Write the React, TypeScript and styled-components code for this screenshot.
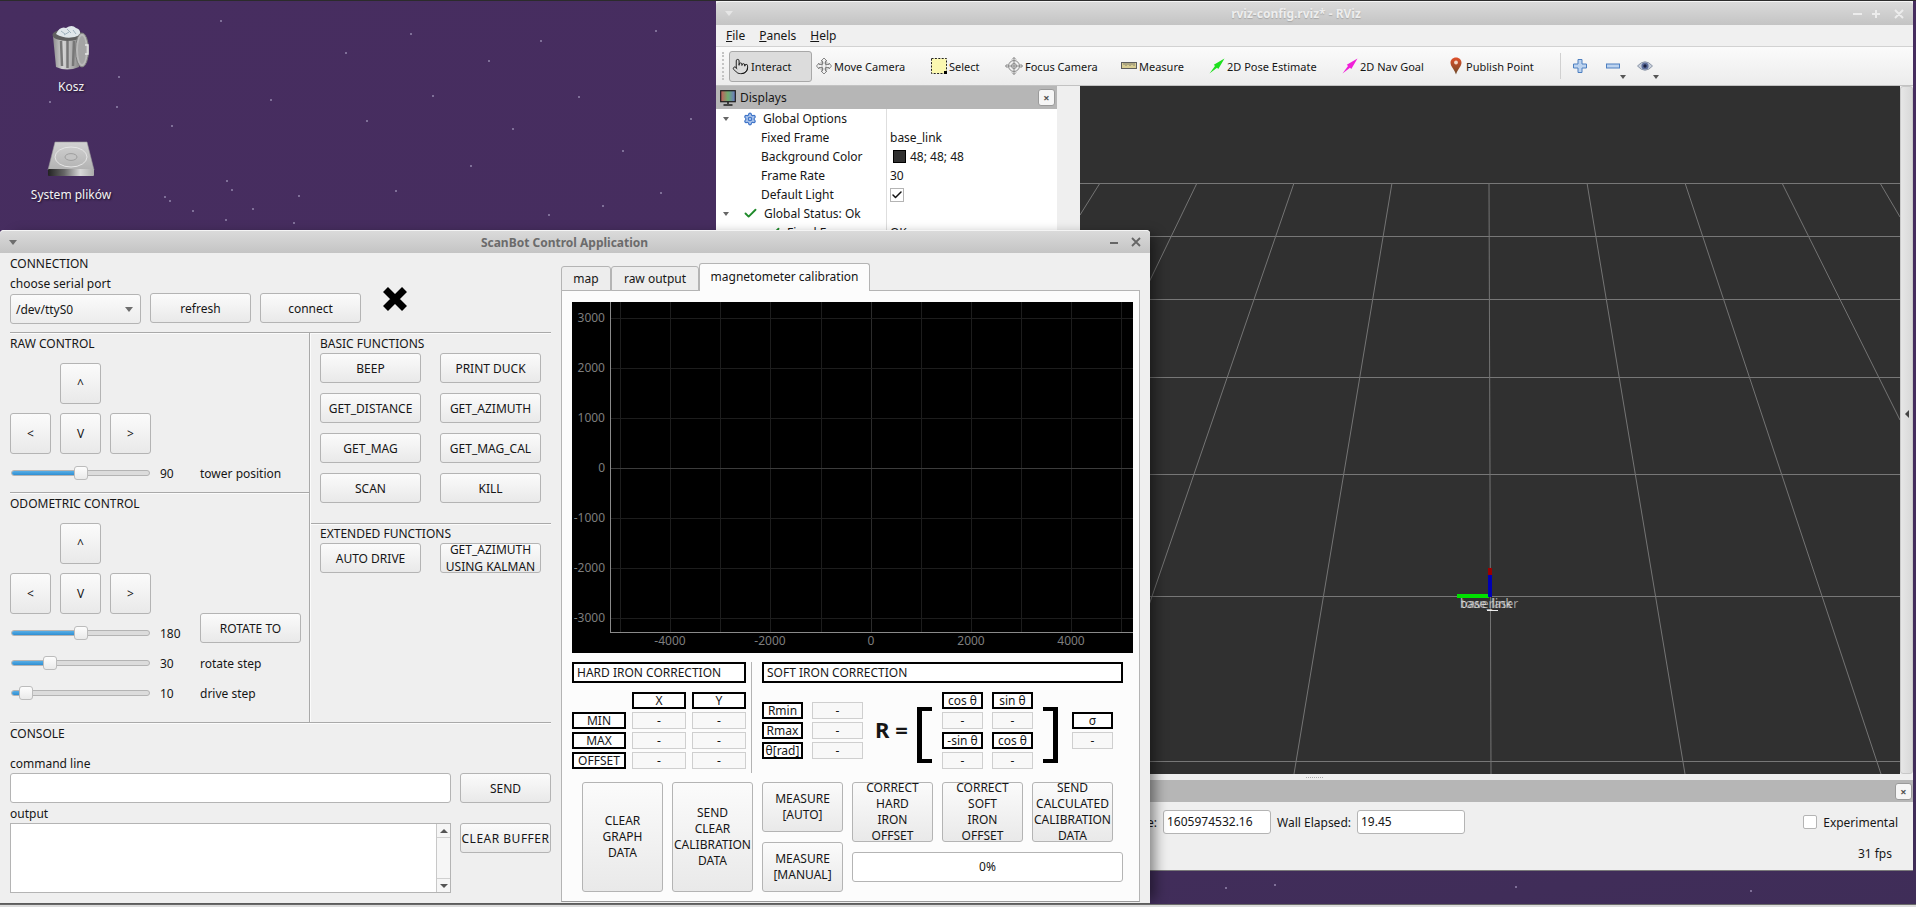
import React from 'react';
import styled, { createGlobalStyle } from 'styled-components';
import { Check, Settings, Pointer } from 'lucide-react';

const GlobalStyle = createGlobalStyle`
  html, body {
    margin: 0;
    padding: 0;
    width: 1916px;
    height: 907px;
    overflow: hidden;
    background: #452d5e;
    font-family: "Noto Sans", "DejaVu Sans", sans-serif;
    font-size: 12px;
    color: #161616;
  }
  * { box-sizing: border-box; }
`;

const Desktop = styled.div`
  position: relative;
  width: 1916px;
  height: 907px;
  overflow: hidden;
  background: linear-gradient(170deg, #472d60 0%, #452d5e 60%, #3f2d58 100%);
`;

const Wallpaper = styled.svg`
  position: absolute;
  inset: 0;
`;

const TopEdge = styled.div`
  position: absolute;
  left: 0;
  top: 0;
  width: 100%;
  height: 1px;
  background: #2b2b2b;
`;

const BottomEdge = styled.div`
  position: absolute;
  left: 0;
  bottom: 0;
  width: 100%;
  height: 3px;
  border-top: 1px solid #6a6a6a;
  background: #dcdcdc;
`;

const DesktopIcon = styled.div<{ $x: number; $y: number }>`
  position: absolute;
  left: ${p => p.$x}px;
  top: ${p => p.$y}px;
  width: 100px;
  display: flex;
  flex-direction: column;
  align-items: center;
  color: #f4f4f4;
  text-shadow: 1px 1px 2px #1a1026;
`;

const IconLabel = styled.div<{ $gap: number }>`
  margin-top: ${p => p.$gap}px;
  line-height: 16px;
`;

/* ---------- shared window parts ---------- */

const TitleBar = styled.div<{ $h: number }>`
  height: ${p => p.$h}px;
  flex: none;
  display: flex;
  align-items: center;
  padding: 0 6px 0 9px;
  background: linear-gradient(#dadada, #c4c4c4);
  border-top: 1px solid #f4f4f4;
  border-radius: 4px 4px 0 0;
`;

const TitleText = styled.div<{ $active?: boolean; $shift: number }>`
  flex: 1;
  text-align: center;
  font-weight: 700;
  font-size: 12px;
  margin-right: ${p => p.$shift}px;
  color: ${p => (p.$active ? '#6b6b6b' : '#ededed')};
  text-shadow: ${p => (p.$active ? 'none' : '0 1px 1px #a8a8a8')};
`;

const MenuArrow = styled.div<{ $faint?: boolean }>`
  width: 0;
  height: 0;
  border-left: 4px solid transparent;
  border-right: 4px solid transparent;
  border-top: 5px solid ${p => (p.$faint ? '#e6e6e6' : '#6e6e6e')};
`;

const WinControls = styled.svg`
  flex: none;
`;

const Btn = styled.button`
  display: flex;
  align-items: center;
  justify-content: center;
  padding: 0;
  margin: 0;
  font: inherit;
  font-size: 12px;
  line-height: 17px;
  color: #161616;
  text-align: center;
  border: 1px solid #b4b4b4;
  border-radius: 3px;
  background: linear-gradient(#fbfbfb, #e9e9e9);
  overflow: visible;
  white-space: nowrap;
`;

/* ---------- ScanBot window ---------- */

const ScanWindow = styled.div`
  position: absolute;
  left: 0;
  top: 230px;
  width: 1150px;
  height: 675px;
  display: flex;
  flex-direction: column;
  background: #efefef;
  border-bottom: 2px solid #5c5c5c;
  border-radius: 4px 4px 0 0;
  box-shadow: 10px 0 12px -5px rgba(0, 0, 0, 0.45);
`;

const ScanBody = styled.div`
  flex: 1;
  display: flex;
`;

const ControlColumn = styled.div`
  width: 561px;
  padding-left: 10px;
  padding-right: 10px;
  display: flex;
  flex-direction: column;
`;

const Heading = styled.div<{ $h?: number }>`
  height: ${p => p.$h ?? 20}px;
  line-height: ${p => p.$h ?? 20}px;
  flex: none;
`;

const ConsoleHeading = styled(Heading)`
  padding-top: 1px;
`;

const ConnectionHeads = styled.div`
  height: 40px;
  padding-top: 1px;
  flex: none;
`;

const ConnectionRow = styled.div`
  height: 31px;
  flex: none;
  display: flex;
  gap: 9px;
`;

const Combo = styled.div`
  width: 131px;
  height: 30px;
  margin-top: 1px;
  display: flex;
  align-items: center;
  justify-content: space-between;
  padding: 0 7px 0 5px;
  border: 1px solid #b4b4b4;
  border-radius: 3px;
  background: linear-gradient(#fbfbfb, #ececec);
`;

const WideBtn = styled(Btn)`
  width: 101px;
  height: 30px;
`;

const ConsoleBtn = styled(Btn)<{ $spread?: boolean }>`
  height: 30px;
  letter-spacing: ${p => (p.$spread ? '0.5px' : '0')};
`;

const CrossIcon = styled.svg`
  margin: -7px 0 0 12px;
`;

const HLine = styled.div<{ $top?: number }>`
  height: 2px;
  flex: none;
  margin-top: ${p => p.$top ?? 0}px;
  border-top: 1px solid #a9a9a9;
  border-bottom: 1px solid #fbfbfb;
`;

const MiddleGrid = styled.div`
  height: 388px;
  flex: none;
  display: grid;
  grid-template-columns: 299px 2px 240px;
`;

const VLine = styled.div`
  border-left: 1px solid #a9a9a9;
  border-right: 1px solid #fbfbfb;
  margin-top: -1px;
`;

const DriveSection = styled.div<{ $h: number }>`
  height: ${p => p.$h}px;
`;

const DPad = styled.div`
  display: grid;
  grid-template-columns: repeat(3, 41px);
  grid-auto-rows: 41px;
  gap: 9px;
  margin-top: 10px;
`;

const PadBtn = styled(Btn)<{ $col: number }>`
  grid-column: ${p => p.$col};
`;

const SliderRow = styled.div<{ $top: number }>`
  display: grid;
  grid-template-columns: 150px 40px 1fr;
  align-items: end;
  margin-top: ${p => p.$top}px;
  height: 20px;
`;

const TallSliderRow = styled(SliderRow)`
  height: 30px;
`;

const SliderCell = styled.div`
  position: relative;
  height: 20px;
  margin-left: 1px;
  width: 139px;
`;

const Track = styled.div`
  position: absolute;
  left: 0;
  right: 0;
  top: 7px;
  height: 6px;
  border: 1px solid #b4b4b4;
  border-radius: 3px;
  background: #dcdcdc;
  overflow: hidden;
`;

const TrackFill = styled.div<{ $x: number }>`
  width: ${p => p.$x}px;
  height: 100%;
  background: linear-gradient(#58aee6, #2f8fd3);
`;

const Thumb = styled.div<{ $x: number }>`
  position: absolute;
  left: ${p => p.$x}px;
  top: 3px;
  width: 14px;
  height: 14px;
  border: 1px solid #bcbcbc;
  border-radius: 3px;
  background: linear-gradient(#fdfdfd, #eaeaea);
`;

const TextCell = styled.div`
  height: 20px;
  padding-top: 1px;
  line-height: 20px;
`;

const FunctionColumn = styled.div`
  padding-left: 9px;
  display: flex;
  flex-direction: column;
`;

const FunctionGrid = styled.div`
  display: grid;
  grid-template-columns: 101px 101px;
  grid-auto-rows: 30px;
  column-gap: 19px;
  row-gap: 10px;
`;

const BleedLine = styled(HLine)`
  margin-left: -9px;
`;

const ConsoleGrid = styled.div`
  display: grid;
  grid-template-columns: 441px 91px;
  column-gap: 9px;
`;

const CommandInput = styled.div`
  height: 30px;
  background: #fff;
  border: 1px solid #b4b4b4;
  border-radius: 3px;
`;

const SpanHeading = styled(ConsoleHeading)`
  grid-column: 1 / 3;
`;

const OutputBox = styled.div`
  height: 70px;
  background: #fff;
  border: 1px solid #b4b4b4;
  display: flex;
  justify-content: flex-end;
`;

const ScrollBar = styled.div`
  width: 14px;
  border-left: 1px solid #c8c8c8;
  background: #f6f6f6;
  display: flex;
  flex-direction: column;
  justify-content: space-between;
`;

const ScrollCap = styled.div<{ $down?: boolean }>`
  height: 14px;
  display: flex;
  align-items: center;
  justify-content: center;
  border-${p => (p.$down ? 'top' : 'bottom')}: 1px solid #d0d0d0;
  &::after {
    content: '';
    border-left: 4px solid transparent;
    border-right: 4px solid transparent;
    border-${p => (p.$down ? 'top' : 'bottom')}: 4px solid #555;
  }
`;

/* ---------- tabs ---------- */

const TabArea = styled.div`
  width: 579px;
  padding-top: 10px;
  display: flex;
  flex-direction: column;
`;

const TabBar = styled.div`
  height: 28px;
  flex: none;
  display: flex;
  align-items: flex-end;
  position: relative;
  z-index: 1;
  margin-bottom: -1px;
`;

const Tab = styled.div<{ $w: number; $active?: boolean }>`
  width: ${p => p.$w}px;
  height: ${p => (p.$active ? 28 : 25)}px;
  display: flex;
  align-items: center;
  justify-content: center;
  border: 1px solid #b4b4b4;
  border-bottom: ${p => (p.$active ? '0' : '1px solid #b4b4b4')};
  border-radius: 3px 3px 0 0;
  background: ${p => (p.$active ? '#fcfcfc' : '#ededed')};
  padding-bottom: ${p => (p.$active ? 3 : 0)}px;
`;

const TabPane = styled.div`
  height: 612px;
  border: 1px solid #b4b4b4;
  border-bottom-color: #9a9a9a;
  background: #fcfcfc;
  padding: 11px 6px 0 10px;
`;

const ChartSvg = styled.svg`
  display: block;
  background: #000;
`;

const ChartLabel = styled.text`
  font-family: "Noto Sans", sans-serif;
  font-size: 12px;
  fill: #7e7e7e;
`;

const CalibrationRow = styled.div`
  display: flex;
  margin-top: 9px;
  height: 111px;
`;

const HardColumn = styled.div`
  width: 174px;
`;

const Divider = styled.div`
  width: 1px;
  margin: 0 10px 0 5px;
  background: #b4b4b4;
`;

const SoftColumn = styled.div`
  width: 361px;
`;

const BoxedTitle = styled.div`
  height: 21px;
  line-height: 17px;
  padding-left: 3px;
  border: 2px solid #000;
  background: #fff;
`;

const HardGrid = styled.div`
  display: grid;
  grid-template-columns: repeat(3, 54px);
  grid-auto-rows: 17px;
  gap: 3px 6px;
  margin-top: 9px;
`;

const Tag = styled.div<{ $col?: number }>`
  ${p => (p.$col ? `grid-column: ${p.$col};` : '')}
  height: 17px;
  line-height: 13px;
  text-align: center;
  border: 2px solid #000;
  background: #fff;
  white-space: nowrap;
`;

const Readout = styled.div`
  height: 17px;
  line-height: 15px;
  text-align: center;
  border: 1px solid #cfcfcf;
  background: #f8f8f8;
`;

const SoftRow = styled.div`
  display: flex;
  align-items: flex-start;
  margin-top: 9px;
`;

const RadiusGrid = styled.div`
  display: grid;
  grid-template-columns: 41px 51px;
  grid-auto-rows: 17px;
  gap: 3px 9px;
  margin-top: 10px;
`;

const Formula = styled.div`
  width: 35px;
  margin: 25px 0 0 12px;
  font-size: 22px;
  font-weight: 700;
  line-height: 24px;
  white-space: nowrap;
`;

const Bracket = styled.div<{ $right?: boolean }>`
  width: 15px;
  height: 56px;
  margin: 15px ${p => (p.$right ? '14px' : '10px')} 0 ${p => (p.$right ? '10px' : '7px')};
  border: 4px solid #000;
  border-${p => (p.$right ? 'left' : 'right')}: 0;
  border-${p => (p.$right ? 'right' : 'left')}-width: 5px;
`;

const MatrixGrid = styled.div`
  display: grid;
  grid-template-columns: 41px 41px;
  grid-auto-rows: 17px;
  gap: 3px 9px;
`;

const SigmaColumn = styled.div`
  width: 41px;
  margin-top: 20px;
  display: flex;
  flex-direction: column;
  gap: 3px;
`;

const ActionRow = styled.div`
  display: flex;
  gap: 9px;
  margin: 9px 0 0 10px;
`;

const TallBtn = styled(Btn)<{ $h: number }>`
  width: 81px;
  height: ${p => p.$h}px;
  line-height: 16px;
`;

const ActionStack = styled.div`
  display: flex;
  flex-direction: column;
  gap: 10px;
`;

const ActionTrio = styled.div`
  display: flex;
  gap: 9px;
`;

const Progress = styled.div`
  width: 271px;
  height: 30px;
  line-height: 28px;
  text-align: center;
  background: #fff;
  border: 1px solid #b4b4b4;
  border-radius: 3px;
`;

/* ---------- RViz window ---------- */

const RvizWindow = styled.div`
  position: absolute;
  left: 716px;
  top: 1px;
  width: 1197px;
  height: 870px;
  display: flex;
  flex-direction: column;
  background: #efefef;
  border-bottom: 1px solid #7a7a7a;
`;

const MenuBar = styled.div`
  height: 22px;
  flex: none;
  display: flex;
  align-items: center;
  gap: 14px;
  padding-left: 10px;
  background: #f0f0f0;
  border-bottom: 1px solid #d2d2d2;
`;

const Toolbar = styled.div`
  height: 39px;
  flex: none;
  display: flex;
  align-items: center;
  padding-left: 6px;
  font-size: 11px;
  background: linear-gradient(#fbfbfb, #ececec);
  border-bottom: 1px solid #c2c2c2;
`;

const Grip = styled.div`
  width: 0;
  height: 28px;
  margin-right: 5px;
  border-left: 2px dotted #c4c4c4;
`;

const Tool = styled.div<{ $w: number; $on?: boolean }>`
  width: ${p => p.$w}px;
  height: 31px;
  flex: none;
  display: flex;
  align-items: center;
  gap: 2px;
  padding-left: ${p => (p.$on ? 2 : 3)}px;
  white-space: nowrap;
  border: 1px solid ${p => (p.$on ? '#a8a8a8' : 'transparent')};
  border-radius: 3px;
  background: ${p => (p.$on ? '#dcdcdc' : 'transparent')};
`;

const ToolSep = styled.div`
  width: 1px;
  height: 26px;
  margin: 0 12px 0 6px;
  background: #d0d0d0;
`;

const MiniTool = styled.div<{ $w: number }>`
  position: relative;
  width: ${p => p.$w}px;
  height: 31px;
  flex: none;
  display: flex;
  align-items: center;
  justify-content: flex-start;
`;

const DropMark = styled.div`
  position: absolute;
  right: 0;
  bottom: 3px;
  border-left: 3px solid transparent;
  border-right: 3px solid transparent;
  border-top: 4px solid #555;
`;

const MainRow = styled.div`
  height: 688px;
  flex: none;
  display: flex;
`;

const DisplaysPanel = styled.div`
  width: 341px;
  margin-right: 23px;
  flex: none;
  background: #fff;
`;

const DockHeader = styled.div`
  height: 23px;
  display: flex;
  align-items: center;
  gap: 4px;
  padding: 0 2px 0 4px;
  background: #b6b6b6;
  font-size: 12px;
`;

const DockTitle = styled.div`
  flex: 1;
`;

const DockClose = styled.div`
  width: 17px;
  height: 17px;
  border: 1px solid #9a9a9a;
  border-radius: 3px;
  background: #f6f6f6;
  display: flex;
  align-items: center;
  justify-content: center;
  font-size: 11px;
  font-weight: 700;
  line-height: 1;
  color: #555;
`;

const TreeRow = styled.div`
  height: 19px;
  display: grid;
  grid-template-columns: 171px 1fr;
`;

const TreeName = styled.div<{ $indent: number }>`
  display: flex;
  align-items: center;
  gap: 6px;
  padding-left: ${p => p.$indent}px;
  white-space: nowrap;
  border-right: 1px solid #dedede;
`;

const TreeValue = styled.div`
  display: flex;
  align-items: center;
  gap: 4px;
  padding-left: 3px;
`;

const Swatch = styled.div`
  width: 13px;
  height: 13px;
  margin-left: 3px;
  background: #303030;
  border: 1px solid #000;
`;

const CheckBox = styled.div`
  width: 14px;
  height: 14px;
  display: flex;
  align-items: center;
  justify-content: center;
  border: 1px solid #b4b4b4;
  background: #fff;
`;

const Twist = styled.div`
  width: 0;
  height: 0;
  margin-right: 8px;
  border-left: 3px solid transparent;
  border-right: 3px solid transparent;
  border-top: 4px solid #666;
`;

const ViewPort = styled.div`
  position: relative;
  width: 820px;
  flex: none;
  background: #303030;
`;

const FrameLabel = styled.div<{ $x: number; $c: string }>`
  position: absolute;
  left: ${p => p.$x}px;
  top: 510px;
  font-size: 12px;
  line-height: 16px;
  color: ${p => p.$c};
`;

const ViewSvg = styled.svg`
  display: block;
`;

const SideHandle = styled.div`
  width: 13px;
  flex: none;
  display: flex;
  align-items: center;
  justify-content: center;
  padding-bottom: 32px;
  background: linear-gradient(90deg, #e6e6e6, #d8d8d8);
  border: 1px solid #c8c8c8;
  border-radius: 3px;
  &::after {
    content: '';
    border-top: 4px solid transparent;
    border-bottom: 4px solid transparent;
    border-right: 4px solid #444;
  }
`;

const SplitDots = styled.div`
  height: 6px;
  flex: none;
  display: flex;
  justify-content: center;
  align-items: center;
  &::after {
    content: '';
    width: 17px;
    border-top: 1px dotted #aaa;
  }
`;

const TimeHeader = styled.div`
  height: 22px;
  flex: none;
  display: flex;
  justify-content: flex-end;
  align-items: center;
  padding-right: 1px;
  background: #b6b6b6;
`;

const TimeRow = styled.div`
  height: 40px;
  flex: none;
  display: flex;
  align-items: center;
`;

const TimeLabel = styled.div<{ $w: number }>`
  width: ${p => p.$w}px;
  text-align: right;
  white-space: nowrap;
  margin-right: 6px;
`;

const TimeInput = styled.div`
  width: 108px;
  height: 24px;
  line-height: 22px;
  padding-left: 3px;
  background: #fff;
  border: 1px solid #b4b4b4;
  border-radius: 3px;
`;

const Experimental = styled.div`
  display: flex;
  align-items: center;
  gap: 6px;
  margin-left: auto;
  margin-right: 15px;
`;

const BlankCheck = styled.div`
  width: 14px;
  height: 14px;
  background: #fff;
  border: 1px solid #b4b4b4;
  border-radius: 2px;
`;

const FpsRow = styled.div`
  flex: 1;
  display: flex;
  justify-content: flex-end;
  align-items: center;
  padding: 0 21px 6px 0;
`;

/* ---------- data ---------- */

const stars: [number, number][] = [
  [220, 20], [118, 76], [49, 101], [116, 106], [270, 99], [171, 125], [226, 180], [231, 189],
  [164, 196], [169, 200], [192, 210], [252, 208], [225, 219], [293, 222], [298, 195],
  [345, 52], [410, 33], [432, 95], [366, 120], [488, 60], [512, 128], [470, 165], [540, 40],
  [578, 96], [622, 150], [655, 30], [602, 205], [690, 118], [395, 190], [548, 214], [660, 192],
  [1225, 887], [1274, 884], [1515, 886], [1750, 890],
];

const vLines = [48, 98, 148, 198, 249, 299, 349, 399, 449, 499, 549];
const hLines = [16, 66, 116, 166, 216, 266, 316];
const yLabels = ['3000', '2000', '1000', '0', '-1000', '-2000', '-3000'];
const xLabels: [number, string][] = [[98, '-4000'], [198, '-2000'], [299, '0'], [399, '2000'], [499, '4000']];

const floorRows = [97, 150, 213, 291, 388, 510, 675];
const floorRays: [number, number, number, number][] = [
  [20, 97, 0, 129],
  [117, 97, 0, 339],
  [214, 97, 11, 688],
  [312, 97, 214, 688],
  [409, 97, 411, 688],
  [507, 97, 605, 688],
  [605, 97, 801, 688],
  [702, 97, 820, 334],
  [800, 97, 820, 131],
];

const functions = ['BEEP', 'PRINT DUCK', 'GET_DISTANCE', 'GET_AZIMUTH', 'GET_MAG', 'GET_MAG_CAL', 'SCAN', 'KILL'];

/* ---------- drawings ---------- */

const TrashIcon = () => (
  <svg width="38" height="46" viewBox="0 0 38 46">
    <defs>
      <linearGradient id="can" x1="0" x2="1" y1="0" y2="0">
        <stop offset="0" stopColor="#8f8f8f" />
        <stop offset="0.35" stopColor="#d4d4d4" />
        <stop offset="0.7" stopColor="#a8a8a8" />
        <stop offset="1" stopColor="#777" />
      </linearGradient>
    </defs>
    <path d="M1 11 L4 42 Q15 47 27 42 L30 11 Z" fill="url(#can)" />
    <path d="M9 16 L10 41 M15.5 16 V43 M22 16 L21 41" stroke="#777" strokeWidth="2.5" />
    <ellipse cx="15.5" cy="10" rx="15" ry="6" fill="#5f5f5f" />
    <path d="M4 9 Q8 1 14 3 Q20 -1 24 3 Q29 4 28 10 Q16 16 4 9 Z" fill="#dfe6ea" />
    <path d="M9 6 L13 9 M15 4 L19 8 M21 5 L24 9 M12 10 L17 7" stroke="#9fb2bd" strokeWidth="1" />
    <ellipse cx="30" cy="25" rx="6.5" ry="17" fill="#b9b9b9" stroke="#7d7d7d" />
    <ellipse cx="30" cy="25" rx="4" ry="14" fill="#a4a4a4" />
    <path d="M33 20 H36 V29 H33" fill="none" stroke="#e8e8e8" strokeWidth="1.4" />
  </svg>
);

const DriveIcon = () => (
  <svg width="48" height="36" viewBox="0 0 48 36">
    <defs>
      <linearGradient id="hdd" x1="0" x2="0" y1="0" y2="1">
        <stop offset="0" stopColor="#d2d2d2" />
        <stop offset="1" stopColor="#b2b2b2" />
      </linearGradient>
      <linearGradient id="hddFront" x1="0" x2="1" y1="0" y2="0">
        <stop offset="0" stopColor="#222" />
        <stop offset="0.35" stopColor="#666" />
        <stop offset="0.7" stopColor="#d8d8d8" />
        <stop offset="1" stopColor="#aaa" />
      </linearGradient>
    </defs>
    <path d="M8 1 H40 L47 29 H1 Z" fill="url(#hdd)" stroke="#9a9a9a" strokeWidth="0.6" />
    <ellipse cx="24" cy="16" rx="16" ry="10" fill="none" stroke="#e6e6e6" />
    <ellipse cx="24" cy="16" rx="6" ry="3.4" fill="#c4c4c4" stroke="#8e8e8e" strokeWidth="0.7" />
    <rect x="1" y="28" width="46" height="7" rx="1" fill="url(#hddFront)" />
  </svg>
);

const MoveIcon = () => (
  <svg width="16" height="18" viewBox="0 0 16 18" fill="#f2f2f2" stroke="#7b7b7b" strokeWidth="0.9">
    <path d="M8 1 L11 4 H9.5 V7.5 H13 V6 L15.5 9 L13 12 V10.5 H9.5 V14 H11 L8 17 L5 14 H6.5 V10.5 H3 V12 L0.5 9 L3 6 V7.5 H6.5 V4 H5 Z" />
    <path d="M4 6 H12 M4 12 H12 M6 4.5 V13.5 M10 4.5 V13.5" strokeWidth="0.5" fill="none" />
  </svg>
);

const SelectIcon = () => (
  <svg width="16" height="16" viewBox="0 0 16 16">
    <rect x="0.5" y="0.5" width="15" height="15" fill="#fbf8b0" stroke="#222" strokeDasharray="2 1.4" />
    <rect x="13" y="13" width="3" height="3" fill="#000" />
  </svg>
);

const FocusIcon = () => (
  <svg width="18" height="18" viewBox="0 0 18 18" fill="none" stroke="#8a8a8a">
    <circle cx="9" cy="9" r="5.5" fill="#efefef" />
    <circle cx="9" cy="9" r="2.5" />
    <path d="M9 0.5 V17.5 M0.5 9 H17.5" />
    <path d="M7 2.5 L9 0.5 L11 2.5 M7 15.5 L9 17.5 L11 15.5 M2.5 7 L0.5 9 L2.5 11 M15.5 7 L17.5 9 L15.5 11" />
  </svg>
);

const RulerIcon = () => (
  <svg width="16" height="16" viewBox="0 0 16 16">
    <rect x="0.5" y="4.5" width="15" height="6" fill="#d8cd94" stroke="#5e5e5e" />
    <path d="M3 5 V7 M5 5 V8 M7 5 V7 M9 5 V8 M11 5 V7 M13 5 V8" stroke="#5e5e5e" strokeWidth="0.7" />
  </svg>
);

const ArrowIcon: React.FC<{ color: string }> = ({ color }) => (
  <svg width="16" height="16" viewBox="0 0 16 16">
    <path d="M0.5 15.5 L6 8 L4.8 6.8 L15.5 0.5 L9.3 11 L8 9.8 Z" fill={color} />
  </svg>
);

const PinIcon = () => (
  <svg width="16" height="18" viewBox="0 0 16 18">
    <defs>
      <linearGradient id="pin" x1="0" x2="0" y1="0" y2="1">
        <stop offset="0" stopColor="#e0502a" />
        <stop offset="1" stopColor="#6d4a2a" />
      </linearGradient>
    </defs>
    <path d="M8 0.5 C4.6 0.5 2.5 3 2.5 5.8 C2.5 9.5 6.5 12.5 8 17.5 C9.5 12.5 13.5 9.5 13.5 5.8 C13.5 3 11.4 0.5 8 0.5 Z" fill="url(#pin)" />
    <circle cx="8" cy="5.5" r="1.9" fill="#f1d8c8" />
  </svg>
);

const PlusIcon = () => (
  <svg width="14" height="14" viewBox="0 0 14 14">
    <path d="M5 0.5 H9 V5 H13.5 V9 H9 V13.5 H5 V9 H0.5 V5 H5 Z" fill="#bcd3ef" stroke="#4d7fc0" />
  </svg>
);

const MinusIcon = () => (
  <svg width="14" height="14" viewBox="0 0 14 14">
    <rect x="0.5" y="5" width="13" height="4" fill="#bcd3ef" stroke="#4d7fc0" />
  </svg>
);

const EyeIcon = () => (
  <svg width="16" height="12" viewBox="0 0 16 12">
    <path d="M0.5 6 Q8 -2.5 15.5 6 Q8 14.5 0.5 6 Z" fill="#c9d0dc" stroke="#8d97a8" />
    <circle cx="8" cy="6" r="3.6" fill="#5c6d9b" />
    <circle cx="8" cy="6" r="1.7" fill="#1b2140" />
  </svg>
);

const MonitorIcon = () => (
  <svg width="16" height="16" viewBox="0 0 16 16">
    <defs>
      <linearGradient id="screen" x1="0" x2="1" y1="0" y2="0">
        <stop offset="0" stopColor="#c75a5a" />
        <stop offset="0.5" stopColor="#6fae6f" />
        <stop offset="1" stopColor="#6a78c6" />
      </linearGradient>
    </defs>
    <rect x="0.7" y="0.7" width="14.6" height="11" fill="url(#screen)" stroke="#1d1d1d" strokeWidth="1.2" />
    <path d="M8 12 V14 M3.5 15 H12.5" stroke="#1d1d1d" strokeWidth="1.5" />
  </svg>
);

const Slider: React.FC<{ x: number }> = ({ x }) => (
  <SliderCell>
    <Track>
      <TrackFill $x={x + 4} />
    </Track>
    <Thumb $x={x} />
  </SliderCell>
);

const App: React.FC = () => {
  return (
    <Desktop>
      <GlobalStyle />
      <Wallpaper width="1916" height="907">
        {stars.map(([x, y]) => (
          <rect key={`${x}-${y}`} x={x} y={y} width="2" height="2" fill="#7f6f98" />
        ))}
      </Wallpaper>
      <TopEdge />

      <DesktopIcon $x={21} $y={25}>
        <TrashIcon />
        <IconLabel $gap={8}>Kosz</IconLabel>
      </DesktopIcon>
      <DesktopIcon $x={21} $y={141}>
        <DriveIcon />
        <IconLabel $gap={10}>System plików</IconLabel>
      </DesktopIcon>

      <RvizWindow>
        <TitleBar $h={24}>
          <MenuArrow $faint />
          <TitleText $shift={-10}>rviz-config.rviz* - RViz</TitleText>
          <WinControls width="58" height="14" viewBox="0 0 58 14" fill="none" stroke="#ececec" strokeWidth="2">
            <path d="M4 7 H13 M27 3 V11 M23 7 H31 M46 3 L54 11 M54 3 L46 11" />
          </WinControls>
        </TitleBar>
        <MenuBar>
          <span><u>F</u>ile</span>
          <span><u>P</u>anels</span>
          <span><u>H</u>elp</span>
        </MenuBar>
        <Toolbar>
          <Grip />
          <Tool $w={83} $on>
            <Pointer size={17} strokeWidth={1.3} color="#111" />
            <span>Interact</span>
          </Tool>
          <Tool $w={115}><MoveIcon /><span>Move Camera</span></Tool>
          <Tool $w={74}><SelectIcon /><span>Select</span></Tool>
          <Tool $w={116}><FocusIcon /><span>Focus Camera</span></Tool>
          <Tool $w={88}><RulerIcon /><span>Measure</span></Tool>
          <Tool $w={133}><ArrowIcon color="#1fe01f" /><span>2D Pose Estimate</span></Tool>
          <Tool $w={106}><ArrowIcon color="#f01fd8" /><span>2D Nav Goal</span></Tool>
          <Tool $w={110}><PinIcon /><span>Publish Point</span></Tool>
          <ToolSep />
          <MiniTool $w={33}><PlusIcon /></MiniTool>
          <MiniTool $w={20}><MinusIcon /><DropMark /></MiniTool>
          <MiniTool $w={11} />
          <MiniTool $w={22}><EyeIcon /><DropMark /></MiniTool>
        </Toolbar>
        <MainRow>
          <DisplaysPanel>
            <DockHeader>
              <MonitorIcon />
              <DockTitle>Displays</DockTitle>
              <DockClose>×</DockClose>
            </DockHeader>
            <TreeRow>
              <TreeName $indent={7}>
                <Twist />
                <Settings size={14} color="#3f74c8" fill="#a9c3ea" />
                <span>Global Options</span>
              </TreeName>
              <TreeValue />
            </TreeRow>
            <TreeRow>
              <TreeName $indent={45}>Fixed Frame</TreeName>
              <TreeValue>base_link</TreeValue>
            </TreeRow>
            <TreeRow>
              <TreeName $indent={45}>Background Color</TreeName>
              <TreeValue><Swatch />48; 48; 48</TreeValue>
            </TreeRow>
            <TreeRow>
              <TreeName $indent={45}>Frame Rate</TreeName>
              <TreeValue>30</TreeValue>
            </TreeRow>
            <TreeRow>
              <TreeName $indent={45}>Default Light</TreeName>
              <TreeValue>
                <CheckBox><Check size={12} strokeWidth={3} color="#111" /></CheckBox>
              </TreeValue>
            </TreeRow>
            <TreeRow>
              <TreeName $indent={7}>
                <Twist />
                <Check size={15} strokeWidth={3} color="#1f8a2a" />
                <span>Global Status: Ok</span>
              </TreeName>
              <TreeValue />
            </TreeRow>
            <TreeRow>
              <TreeName $indent={50}>
                <Check size={15} strokeWidth={3} color="#1f8a2a" />
                <span>Fixed Frame</span>
              </TreeName>
              <TreeValue>OK</TreeValue>
            </TreeRow>
          </DisplaysPanel>
          <ViewPort>
            <ViewSvg width="820" height="688" viewBox="0 0 820 688">
              {floorRows.map(y => (
                <line key={y} x1="0" x2="820" y1={y + 0.5} y2={y + 0.5} stroke="#777" />
              ))}
              {floorRays.map(([x1, y1, x2, y2]) => (
                <line key={x1} x1={x1} y1={y1} x2={x2} y2={y2} stroke="#747474" />
              ))}
              <rect x="377" y="508" width="32" height="4" fill="#00e000" />
              <rect x="408" y="482" width="4" height="8" fill="#9a0000" />
              <rect x="408" y="489" width="4" height="22" fill="#0000b4" />
              <rect x="407" y="524" width="11" height="1" fill="#eee" />
            </ViewSvg>
            <FrameLabel $x={380} $c="rgba(235,235,235,0.75)">base_link</FrameLabel>
            <FrameLabel $x={381} $c="rgba(235,235,235,0.6)">tower</FrameLabel>
            <FrameLabel $x={411} $c="rgba(235,235,235,0.6)">laser</FrameLabel>
          </ViewPort>
          <SideHandle />
        </MainRow>
        <SplitDots />
        <TimeHeader>
          <DockClose>×</DockClose>
        </TimeHeader>
        <TimeRow>
          <TimeLabel $w={441}>Wall Time:</TimeLabel>
          <TimeInput>1605974532.16</TimeInput>
          <TimeLabel $w={80}>Wall Elapsed:</TimeLabel>
          <TimeInput>19.45</TimeInput>
          <Experimental>
            <BlankCheck />
            <span>Experimental</span>
          </Experimental>
        </TimeRow>
        <FpsRow>31 fps</FpsRow>
      </RvizWindow>

      <ScanWindow>
        <TitleBar $h={23}>
          <MenuArrow />
          <TitleText $active $shift={-4}>ScanBot Control Application</TitleText>
          <WinControls width="36" height="14" viewBox="0 0 36 14" fill="none" stroke="#666" strokeWidth="1.8">
            <path d="M2 8 H10 M24 3 L32 11 M32 3 L24 11" />
          </WinControls>
        </TitleBar>
        <ScanBody>
          <ControlColumn>
            <ConnectionHeads>
              <Heading $h={20}>CONNECTION</Heading>
              <Heading $h={19}>choose serial port</Heading>
            </ConnectionHeads>
            <ConnectionRow>
              <Combo>
                <span>/dev/ttyS0</span>
                <MenuArrow />
              </Combo>
              <WideBtn>refresh</WideBtn>
              <WideBtn>connect</WideBtn>
              <CrossIcon width="26" height="26" viewBox="0 0 26 26">
                <path d="M3.5 3.5 L22.5 22.5 M22.5 3.5 L3.5 22.5" stroke="#000" strokeWidth="7" />
              </CrossIcon>
            </ConnectionRow>
            <HLine $top={8} />
            <MiddleGrid>
              <div>
                <DriveSection $h={158}>
                  <Heading $h={19}>RAW CONTROL</Heading>
                  <DPad>
                    <PadBtn $col={2}>^</PadBtn>
                    <PadBtn $col={1}>&lt;</PadBtn>
                    <PadBtn $col={2}>V</PadBtn>
                    <PadBtn $col={3}>&gt;</PadBtn>
                  </DPad>
                  <SliderRow $top={9}>
                    <Slider x={63} />
                    <TextCell>90</TextCell>
                    <TextCell>tower position</TextCell>
                  </SliderRow>
                </DriveSection>
                <HLine />
                <DriveSection $h={227}>
                  <Heading $h={19}>ODOMETRIC CONTROL</Heading>
                  <DPad>
                    <PadBtn $col={2}>^</PadBtn>
                    <PadBtn $col={1}>&lt;</PadBtn>
                    <PadBtn $col={2}>V</PadBtn>
                    <PadBtn $col={3}>&gt;</PadBtn>
                  </DPad>
                  <TallSliderRow $top={-1}>
                    <Slider x={63} />
                    <TextCell>180</TextCell>
                    <WideBtn>ROTATE TO</WideBtn>
                  </TallSliderRow>
                  <SliderRow $top={10}>
                    <Slider x={32} />
                    <TextCell>30</TextCell>
                    <TextCell>rotate step</TextCell>
                  </SliderRow>
                  <SliderRow $top={10}>
                    <Slider x={8} />
                    <TextCell>10</TextCell>
                    <TextCell>drive step</TextCell>
                  </SliderRow>
                </DriveSection>
              </div>
              <VLine />
              <FunctionColumn>
                <Heading $h={19}>BASIC FUNCTIONS</Heading>
                <FunctionGrid>
                  {functions.map(name => (
                    <Btn key={name}>{name}</Btn>
                  ))}
                </FunctionGrid>
                <BleedLine $top={20} />
                <Heading $h={18}>EXTENDED FUNCTIONS</Heading>
                <FunctionGrid>
                  <Btn>AUTO DRIVE</Btn>
                  <Btn>GET_AZIMUTH<br />USING KALMAN</Btn>
                </FunctionGrid>
              </FunctionColumn>
            </MiddleGrid>
            <HLine />
            <Heading $h={19}>CONSOLE</Heading>
            <Heading $h={10} />
            <ConsoleHeading>command line</ConsoleHeading>
            <ConsoleGrid>
              <CommandInput />
              <ConsoleBtn>SEND</ConsoleBtn>
              <SpanHeading>output</SpanHeading>
              <OutputBox>
                <ScrollBar>
                  <ScrollCap />
                  <ScrollCap $down />
                </ScrollBar>
              </OutputBox>
              <ConsoleBtn $spread>CLEAR BUFFER</ConsoleBtn>
            </ConsoleGrid>
          </ControlColumn>

          <TabArea>
            <TabBar>
              <Tab $w={50}>map</Tab>
              <Tab $w={88}>raw output</Tab>
              <Tab $w={171} $active>magnetometer calibration</Tab>
            </TabBar>
            <TabPane>
              <ChartSvg width="561" height="351" viewBox="0 0 561 351">
                {vLines.map(x => (
                  <line key={x} x1={x + 0.5} x2={x + 0.5} y1="0" y2="330" stroke={x === 299 ? '#2c2c2c' : '#1d1d1d'} />
                ))}
                {hLines.map(y => (
                  <line key={y} x1="38" x2="561" y1={y + 0.5} y2={y + 0.5} stroke={y === 166 ? '#3c3c3c' : '#1d1d1d'} />
                ))}
                <line x1="38.5" x2="38.5" y1="0" y2="330" stroke="#8a8a8a" />
                <line x1="38" x2="561" y1="330.5" y2="330.5" stroke="#8a8a8a" />
                {hLines.map((y, i) => (
                  <ChartLabel key={y} x="33" y={y + 4} textAnchor="end">{yLabels[i]}</ChartLabel>
                ))}
                {xLabels.map(([x, label]) => (
                  <ChartLabel key={x} x={x} y="343" textAnchor="middle">{label}</ChartLabel>
                ))}
              </ChartSvg>
              <CalibrationRow>
                <HardColumn>
                  <BoxedTitle>HARD IRON CORRECTION</BoxedTitle>
                  <HardGrid>
                    <Tag $col={2}>X</Tag>
                    <Tag>Y</Tag>
                    <Tag>MIN</Tag>
                    <Readout>-</Readout>
                    <Readout>-</Readout>
                    <Tag>MAX</Tag>
                    <Readout>-</Readout>
                    <Readout>-</Readout>
                    <Tag>OFFSET</Tag>
                    <Readout>-</Readout>
                    <Readout>-</Readout>
                  </HardGrid>
                </HardColumn>
                <Divider />
                <SoftColumn>
                  <BoxedTitle>SOFT IRON CORRECTION</BoxedTitle>
                  <SoftRow>
                    <RadiusGrid>
                      <Tag>Rmin</Tag>
                      <Readout>-</Readout>
                      <Tag>Rmax</Tag>
                      <Readout>-</Readout>
                      <Tag>θ[rad]</Tag>
                      <Readout>-</Readout>
                    </RadiusGrid>
                    <Formula>R =</Formula>
                    <Bracket />
                    <MatrixGrid>
                      <Tag>cos θ</Tag>
                      <Tag>sin θ</Tag>
                      <Readout>-</Readout>
                      <Readout>-</Readout>
                      <Tag>-sin θ</Tag>
                      <Tag>cos θ</Tag>
                      <Readout>-</Readout>
                      <Readout>-</Readout>
                    </MatrixGrid>
                    <Bracket $right />
                    <SigmaColumn>
                      <Tag>σ</Tag>
                      <Readout>-</Readout>
                    </SigmaColumn>
                  </SoftRow>
                </SoftColumn>
              </CalibrationRow>
              <ActionRow>
                <TallBtn $h={110}>CLEAR<br />GRAPH<br />DATA</TallBtn>
                <TallBtn $h={110}>SEND<br />CLEAR<br />CALIBRATION<br />DATA</TallBtn>
                <ActionStack>
                  <TallBtn $h={50}>MEASURE<br />[AUTO]</TallBtn>
                  <TallBtn $h={50}>MEASURE<br />[MANUAL]</TallBtn>
                </ActionStack>
                <ActionStack>
                  <ActionTrio>
                    <TallBtn $h={60}>CORRECT<br />HARD<br />IRON<br />OFFSET</TallBtn>
                    <TallBtn $h={60}>CORRECT<br />SOFT<br />IRON<br />OFFSET</TallBtn>
                    <TallBtn $h={60}>SEND<br />CALCULATED<br />CALIBRATION<br />DATA</TallBtn>
                  </ActionTrio>
                  <Progress>0%</Progress>
                </ActionStack>
              </ActionRow>
            </TabPane>
          </TabArea>
        </ScanBody>
      </ScanWindow>
      <BottomEdge />
    </Desktop>
  );
};

export default App;
